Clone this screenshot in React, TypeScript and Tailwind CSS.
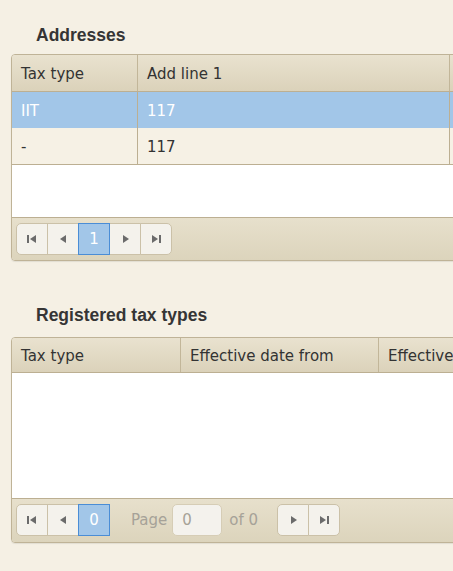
import React from "react";

const cellFont = { fontFamily: "Verdana, 'DejaVu Sans', sans-serif" };

function FirstIcon() {
  return (
    <svg width="10" height="8" viewBox="0 0 10 8">
      <rect x="0" y="0" width="2" height="8" fill="#6b6b6b" />
      <polygon points="9,0 3,4 9,8" fill="#6b6b6b" />
    </svg>
  );
}
function PrevIcon() {
  return (
    <svg width="7" height="8" viewBox="0 0 7 8">
      <polygon points="6,0 0,4 6,8" fill="#6b6b6b" />
    </svg>
  );
}
function NextIcon() {
  return (
    <svg width="7" height="8" viewBox="0 0 7 8">
      <polygon points="1,0 7,4 1,8" fill="#6b6b6b" />
    </svg>
  );
}
function LastIcon() {
  return (
    <svg width="10" height="8" viewBox="0 0 10 8">
      <polygon points="1,0 7,4 1,8" fill="#6b6b6b" />
      <rect x="8" y="0" width="2" height="8" fill="#6b6b6b" />
    </svg>
  );
}

function PagerButton({
  children,
  first,
  last,
  active,
}: {
  children: React.ReactNode;
  first?: boolean;
  last?: boolean;
  active?: boolean;
}) {
  return (
    <div
      className={
        "flex h-[32px] w-[32px] items-center justify-center border text-[15px] " +
        (first ? "rounded-l-[5px] " : "-ml-px ") +
        (last ? "rounded-r-[5px] " : "") +
        (active
          ? "relative z-10 border-[#4a8dd6] bg-[#a2c6e8] text-white"
          : "border-[#cbc1a8] bg-[#f4f2ec]")
      }
      style={cellFont}
    >
      {children}
    </div>
  );
}

function Title({ children, className }: { children: React.ReactNode; className?: string }) {
  return (
    <h2
      className={"h-[20px] pl-[25px] text-[17.5px] font-bold leading-[20px] text-[#353535] " + (className ?? "")}
      style={{ fontFamily: "'Liberation Sans', Arial, sans-serif" }}
    >
      {children}
    </h2>
  );
}

const headerBg = "bg-[linear-gradient(#e9e2cf,#dbd2ba)]";
const pagerBg = "bg-[linear-gradient(#e7e0cc,#dcd4bc)]";

export default function App() {
  return (
    <div className="h-[571px] w-[453px] overflow-hidden bg-[#f5f0e4]">
      <div className="pl-[11px] pt-[25px]">
        <Title>Addresses</Title>
        <div className="mt-[9px] w-[620px] overflow-hidden rounded-[4px] border border-[#bfb397] shadow-[0_1px_1px_rgba(0,0,0,0.08)]" style={cellFont}>
          <div className={"flex h-[37px] border-b border-[#bcaf92] text-[15px] text-[#333] " + headerBg}>
            <div className="flex w-[126px] items-center border-r border-[#c2b699] pl-[9px] pt-[2px]">Tax type</div>
            <div className="flex w-[312px] items-center border-r border-[#c2b699] pl-[9px] pt-[2px]">Add line 1</div>
            <div className="flex-1" />
          </div>
          <div className="flex h-[36px] bg-[#a2c6e8] text-[15px] text-white">
            <div className="flex w-[126px] items-center border-r border-[#bcaf92] pl-[9px] pt-[2px]">IIT</div>
            <div className="flex w-[312px] items-center border-r border-[#bcaf92] pl-[9px] pt-[2px]">117</div>
            <div className="flex-1" />
          </div>
          <div className="flex h-[37px] border-b border-[#bcaf92] bg-[#f6f1e5] text-[15px] text-[#333]">
            <div className="flex w-[126px] items-center border-r border-[#bcaf92] pl-[9px] pt-[2px]">-</div>
            <div className="flex w-[312px] items-center border-r border-[#bcaf92] pl-[9px] pt-[2px]">117</div>
            <div className="flex-1" />
          </div>
          <div className="h-[52px] bg-white" />
          <div className={"flex h-[43px] items-start border-t border-[#bcaf92] pl-[4px] pt-[5px] " + pagerBg}>
            <div className="flex">
              <PagerButton first><FirstIcon /></PagerButton>
              <PagerButton><PrevIcon /></PagerButton>
              <PagerButton active>1</PagerButton>
              <PagerButton><NextIcon /></PagerButton>
              <PagerButton last><LastIcon /></PagerButton>
            </div>
          </div>
        </div>

        <Title className="mt-[44px]">Registered tax types</Title>
        <div className="mt-[12px] w-[620px] overflow-hidden rounded-[4px] border border-[#bfb397] shadow-[0_1px_1px_rgba(0,0,0,0.08)]" style={cellFont}>
          <div className={"flex h-[35px] border-b border-[#bcaf92] text-[15px] text-[#333] " + headerBg}>
            <div className="flex w-[169px] items-center border-r border-[#c2b699] pl-[9px] pt-[2px]">Tax type</div>
            <div className="flex w-[198px] items-center border-r border-[#c2b699] pl-[9px] pt-[2px]">Effective date from</div>
            <div className="flex flex-1 items-center pl-[9px] pt-[2px]">Effective date to</div>
          </div>
          <div className="h-[125px] bg-white" />
          <div className={"flex h-[44px] items-start border-t border-[#bcaf92] pl-[4px] pt-[5px] text-[15px] text-[#a6a298] " + pagerBg}>
            <div className="flex">
              <PagerButton first><FirstIcon /></PagerButton>
              <PagerButton><PrevIcon /></PagerButton>
              <PagerButton active>0</PagerButton>
            </div>
            <div className="ml-[21px] flex h-[32px] items-center">Page</div>
            <div className="ml-[5px] flex h-[32px] w-[50px] items-center rounded-[5px] border border-[#d6cdb6] bg-[#f4f2ed] pl-[9px]">0</div>
            <div className="ml-[7px] flex h-[32px] items-center">of 0</div>
            <div className="ml-[19px] flex">
              <PagerButton first><NextIcon /></PagerButton>
              <PagerButton last><LastIcon /></PagerButton>
            </div>
          </div>
        </div>
      </div>
    </div>
  );
}
